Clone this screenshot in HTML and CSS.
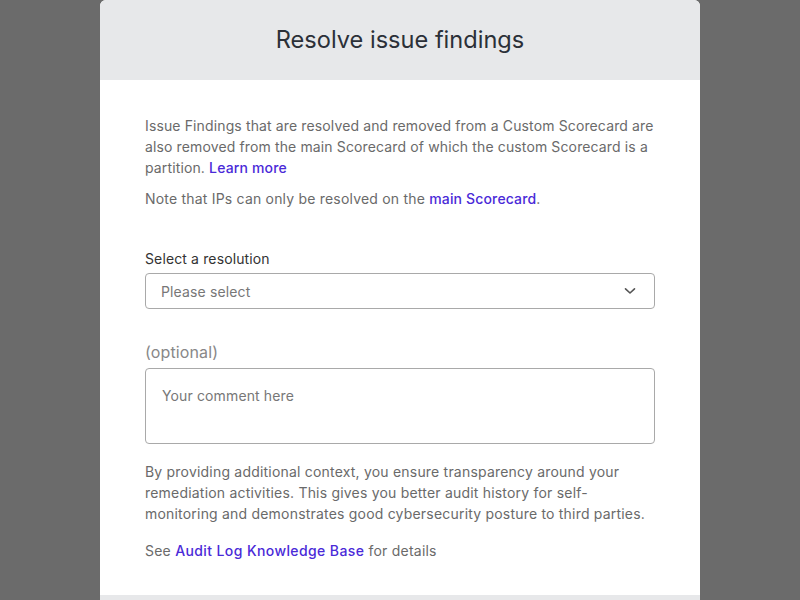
FILE: index.html
```html
<!DOCTYPE html>
<html>
<head>
<meta charset="utf-8">
<link rel="stylesheet" href="styles.css">
</head>
<body>
<div class="backdrop">
  <div class="modal">
    <div class="modal-header">
      <h1 class="title">Resolve issue findings</h1>
    </div>
    <div class="modal-body">
      <p class="text">Issue Findings that are resolved and removed from a Custom Scorecard are also removed from the main Scorecard of which the custom Scorecard is a partition. <a class="link" href="#">Learn more</a></p>
      <p class="text note">Note that IPs can only be resolved on the <a class="link" href="#">main Scorecard</a>.</p>
      <div class="field">
        <label class="label">Select a resolution</label>
        <div class="select">
          <span class="placeholder">Please select</span>
          <svg class="chevron" width="12" height="8" viewBox="0 0 12 8"><path d="M1.5 1.8 L6 6 L10.5 1.8" fill="none" stroke="#555" stroke-width="1.6" stroke-linecap="round" stroke-linejoin="round"/></svg>
        </div>
      </div>
      <div class="field optional-field">
        <label class="optional">(optional)</label>
        <div class="textarea"><span class="placeholder">Your comment here</span></div>
      </div>
      <p class="text help">By providing additional context, you ensure transparency around your remediation activities. This gives you better audit history for self-monitoring and demonstrates good cybersecurity posture to third parties.</p>
      <p class="text see">See <a class="link" href="#">Audit Log Knowledge Base</a> for details</p>
    </div>
    <div class="modal-footer"></div>
  </div>
</div>
</body>
</html>
```
FILE: styles.css
```css
* { box-sizing: border-box; }
html, body { margin: 0; padding: 0; height: 100%; overflow: hidden; }
body { font-family: Inter, "Noto Sans", sans-serif; background: #6b6b6b; }
.backdrop { height: 600px; display: flex; justify-content: center; }
.modal { width: 600px; background: #fff; border-radius: 6px 6px 0 0; overflow: hidden; display: flex; flex-direction: column; }
.modal-header { height: 80px; background: #e7e8ea; display: flex; align-items: center; justify-content: center; padding-bottom: 2px; }
.title { margin: 0; font-size: 23.6px; font-weight: 400; color: #2b3038; letter-spacing: 0; }
.modal-body { padding: 35px 45px 0; height: 515px; }
.text { margin: 0; font-size: 14px; line-height: 21px; color: #6a6a6a; letter-spacing: 0.13px; }
.note { margin-top: 10px; letter-spacing: 0.2px; }
.link { color: #4a2ad8; text-decoration: none; font-weight: 500; letter-spacing: 0.15px; }
.field { display: flex; flex-direction: column; }
.field:first-of-type { margin-top: 39px; }
.label { font-size: 14px; line-height: 21px; color: #333; margin-bottom: 4px; letter-spacing: 0.13px; }
.select { height: 36px; border: 1px solid #a9a9a9; border-radius: 4px; display: flex; align-items: center; justify-content: space-between; padding: 0 18px 0 15px; }
.placeholder { font-size: 14px; color: #777; letter-spacing: 0.13px; }
.optional-field { margin-top: 32px; }
.optional { font-size: 16px; line-height: 22px; color: #888; margin-bottom: 5px; letter-spacing: 0.13px; }
.textarea { height: 76px; border: 1px solid #a9a9a9; border-radius: 4px; padding: 17px 16px; line-height: 19px; }
.help { margin-top: 17px; letter-spacing: 0.2px; }
.see { margin-top: 16px; letter-spacing: 0.22px; }
.see .link { letter-spacing: 0.4px; }
.modal-footer { flex: 1; background: #e7e8ea; }
```
